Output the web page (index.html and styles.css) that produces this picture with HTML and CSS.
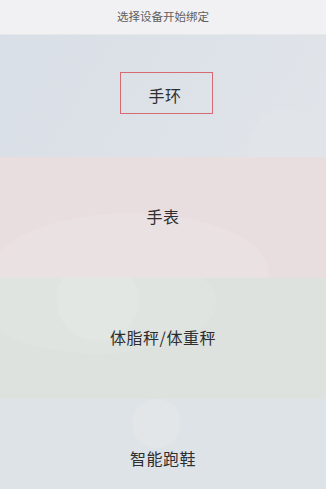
FILE: index.html
```html
<!DOCTYPE html>
<html lang="zh">
<head>
<meta charset="utf-8">
<link rel="stylesheet" href="styles.css">
</head>
<body>
<div class="page">
  <div class="header">选择设备开始绑定</div>
  <div class="item band"><span class="label selected">手环</span></div>
  <div class="item watch"><span class="label">手表</span></div>
  <div class="item scale"><span class="label">体脂秤/体重秤</span></div>
  <div class="item shoe"><span class="label">智能跑鞋</span></div>
</div>
</body>
</html>
```
FILE: styles.css
```css
html, body {
  margin: 0;
  padding: 0;
}
body {
  width: 326px;
  height: 489px;
  overflow: hidden;
  font-family: "Noto Sans CJK SC", "Noto Sans", sans-serif;
  background: #dfe4e8;
}
.page {
  display: flex;
  flex-direction: column;
}
.header {
  height: 35px;
  flex: none;
  display: flex;
  align-items: center;
  justify-content: center;
  background: #f1f1f3;
  color: #5e5e60;
  font-size: 11.5px;
  border-bottom: 1px solid #e6e8ea;
  box-sizing: border-box;
  padding-bottom: 2px;
}
.item {
  height: 122px;
  flex: none;
  display: flex;
  align-items: center;
  justify-content: center;
  position: relative;
  overflow: hidden;
  box-sizing: border-box;
  padding-bottom: 4px;
}
.watch, .scale {
  height: 121px;
}
.label {
  position: relative;
  font-size: 16px;
  line-height: 20px;
  color: #2e2e30;
  letter-spacing: 0.5px;
}
.selected {
  width: 93px;
  height: 42px;
  box-sizing: border-box;
  border: 1px solid #d66a72;
  display: flex;
  align-items: center;
  justify-content: center;
  padding-top: 4px;
  padding-right: 3px;
  margin-left: 7px;
  margin-bottom: 2px;
}
.band {
  background: radial-gradient(circle at 88% 92%, #e1e5ea 0 12%, transparent 13%),
              linear-gradient(120deg, #d9dfe6 0%, #dde2e8 55%, #e1e5ea 100%);
}
.watch {
  background: radial-gradient(ellipse 70% 80% at 40% 95%, #eae1e2 0 60%, transparent 61%),
              #e8dddf;
}
.scale {
  background: radial-gradient(circle at 30% 18%, #e2e7e3 0 16%, transparent 17%),
              radial-gradient(ellipse 60% 70% at 30% 20%, #dfe4e0 0 60%, transparent 61%),
              #dde2de;
}
.shoe {
  background: radial-gradient(circle at 48% 20%, #e2e6e9 0 12%, transparent 13%),
              #dee3e7;
}
```
